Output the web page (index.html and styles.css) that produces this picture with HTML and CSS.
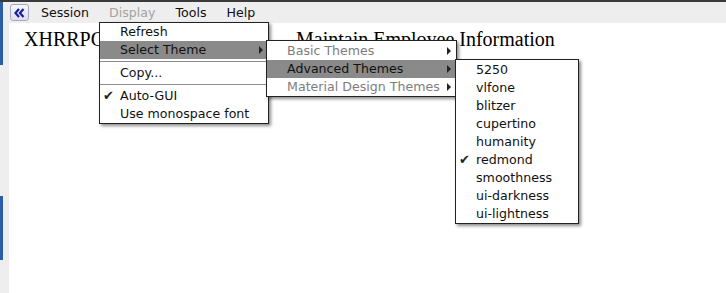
FILE: index.html
```html
<!DOCTYPE html>
<html lang="en">
<head>
  <meta charset="UTF-8" />
  <title>Maintain Employee Information</title>
  <link rel="stylesheet" href="styles.css">
</head>
<body>
  <div class="topline"></div>
  <div class="frame">
    <div class="rail">
      <span class="rail-mark first"></span>
      <span class="rail-mark second"></span>
    </div>
    <div class="main">
      <nav class="menubar">
        <button class="collapse" title="Hide">
          <svg width="11" height="10" viewBox="0 0 11 10">
            <path d="M5 1 L1.5 5 L5 9 M9.5 1 L6 5 L9.5 9" fill="none" stroke="#1b1f9c" stroke-width="2.2"/>
          </svg>
        </button>
        <div class="bar-item">Session</div>
        <div class="bar-item disabled open">Display
          <ul class="menu menu-display">
            <li class="item">Refresh</li>
            <li class="item active has-sub">Select Theme
              <ul class="menu menu-themes">
                <li class="item disabled has-sub">Basic Themes</li>
                <li class="item active has-sub">Advanced Themes
                  <ul class="menu menu-advanced">
                    <li class="item">5250</li>
                    <li class="item">vlfone</li>
                    <li class="item">blitzer</li>
                    <li class="item">cupertino</li>
                    <li class="item">humanity</li>
                    <li class="item checked">redmond</li>
                    <li class="item">smoothness</li>
                    <li class="item">ui-darkness</li>
                    <li class="item">ui-lightness</li>
                  </ul>
                </li>
                <li class="item disabled has-sub">Material Design Themes</li>
              </ul>
            </li>
            <li class="sep"></li>
            <li class="item">Copy...</li>
            <li class="sep"></li>
            <li class="item checked">Auto-GUI</li>
            <li class="item">Use monospace font</li>
          </ul>
        </div>
        <div class="bar-item">Tools</div>
        <div class="bar-item">Help</div>
      </nav>
      <div class="content">
        <div class="heading">
          <span class="pgm">XHRRPGM01</span>
          <span class="title">Maintain Employee Information</span>
        </div>
      </div>
    </div>
  </div>
</body>
</html>
```

FILE: styles.css
```css
* { box-sizing: border-box; }
body {
  margin: 0;
  height: 293px;
  overflow: hidden;
  background: #fff;
  font-family: 'DejaVu Sans', Verdana, sans-serif;
  font-size: 12.6px;
  color: #111;
}
.topline { height: 2px; background: #3a3a3a; }
.frame { display: flex; height: 291px; }
.rail {
  width: 9px;
  background: #eeeeee;
  display: flex;
  flex-direction: column;
}
.rail-mark { width: 3px; background: #2b5ea7; }
.rail-mark.first { height: 63px; }
.rail-mark.second { height: 64px; margin-top: 131px; }
.main { flex: 1; display: flex; flex-direction: column; }
.menubar {
  height: 21px;
  background: #eeeeee;
  display: flex;
  align-items: center;
  padding-left: 1px;
}
.collapse {
  width: 19px; height: 17px;
  margin: 0 2px 0 0; padding: 0;
  border: 1px solid #a7a7c4;
  border-radius: 3px;
  background: linear-gradient(#f7f7fd, #dedeee);
  display: flex; align-items: center; justify-content: center;
}
.bar-item {
  position: relative;
  padding: 0 10px;
  line-height: 21px;
  white-space: nowrap;
}
.bar-item.disabled { color: #a3a3a3; }
.content { flex: 1; background: #fff; padding: 5px 0 0 15px; }
.heading {
  display: flex;
  font-family: 'Liberation Serif', 'Times New Roman', serif;
  font-size: 20px;
  line-height: 23px;
  color: #000;
}
.pgm { width: 272px; }

/* popup menus */
.menu {
  position: absolute;
  list-style: none;
  margin: 0;
  padding: 0;
  background: #fff;
  border: 1px solid #222;
  box-shadow: 2px 2px 3px rgba(0,0,0,0.45);
  color: #111;
  z-index: 10;
}
.menu-display { left: 0; top: 20px; width: 170px; }
.menu-themes { left: calc(100% - 2px); top: -1px; width: 191px; padding-top: 1px; }
.menu-advanced { left: calc(100% - 1px); top: -1px; width: 124px; padding-top: 1px; }
.item {
  position: relative;
  line-height: 18px;
  height: 18px;
  padding-left: 20px;
  white-space: nowrap;
}
.item.active { background: #8a8a8a; }
.menu .item.disabled { color: #7d7d7d; }
.menu .item.active.disabled { color: #111; }
.item.checked::before {
  content: "\2714";
  position: absolute;
  left: 3px;
  top: 0;
  font-size: 13px;
  color: #222;
}
.item.has-sub::after {
  content: "";
  position: absolute;
  right: 5px;
  top: 5px;
  border-left: 4px solid #222;
  border-top: 4px solid transparent;
  border-bottom: 4px solid transparent;
}
.sep { height: 1px; margin: 2px 0; background: #8f8f8f; }
```
